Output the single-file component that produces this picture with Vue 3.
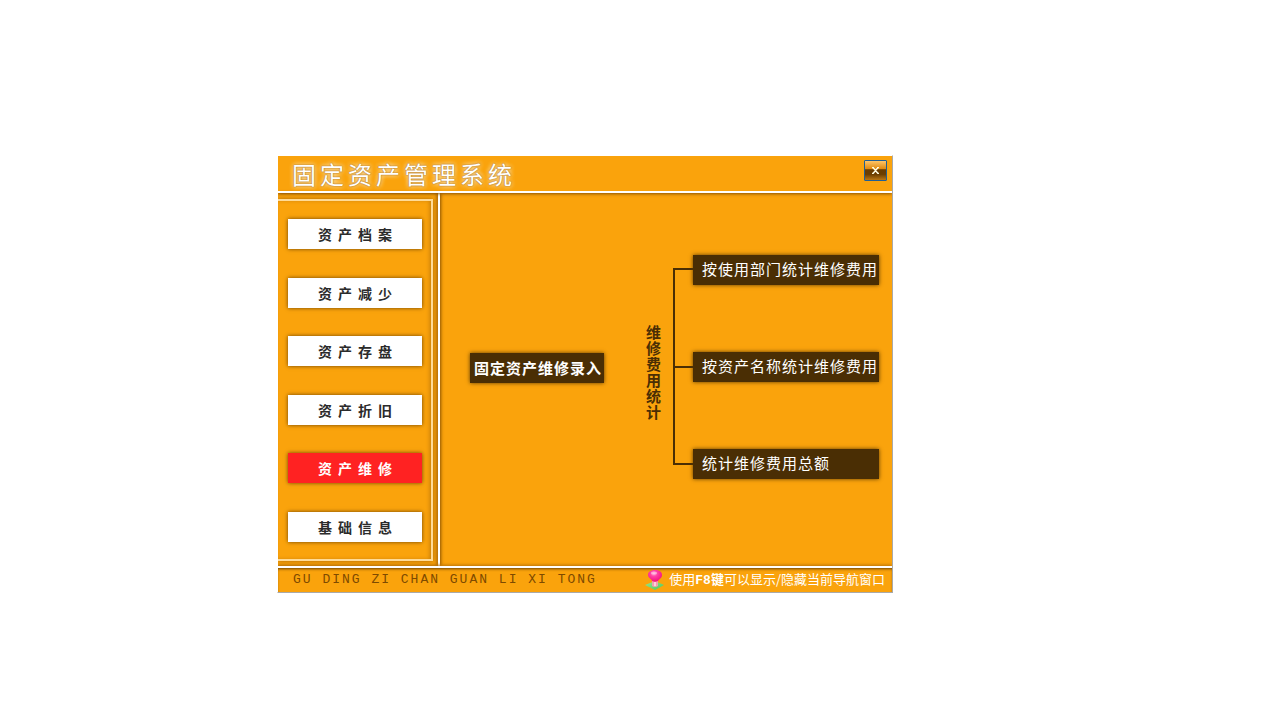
<script setup>
import { ref } from 'vue'

const modules = ['资产档案', '资产减少', '资产存盘', '资产折旧', '资产维修', '基础信息']
const active = ref('资产维修')
const reports = ['按使用部门统计维修费用', '按资产名称统计维修费用', '统计维修费用总额']
</script>

<template>
  <div class="page">
    <section class="window">
      <header class="titlebar">
        <h1>固定资产管理系统</h1>
        <button class="close" type="button" aria-label="关闭">
          <svg viewBox="0 0 7 7" width="7" height="7">
            <path d="M0 .5h2M5 .5h2M1 .5l5 6M6 .5l-5 6M0 6.500h2M5 6.500h2" fill="none" stroke="#fffbe0" stroke-width="1.500" />
          </svg>
        </button>
      </header>

      <div class="body">
        <nav class="sidebar">
          <div class="frame">
            <button
              v-for="m in modules"
              :key="m"
              type="button"
              class="module"
              :class="{ active: m === active }"
              @click="active = m"
            >{{ m }}</button>
          </div>
        </nav>
        <main class="flow">
          <button type="button" class="node entry">固定资产维修录入</button>
          <h2>维修费用统计</h2>
          <div class="bracket"><i></i></div>
          <div class="reports">
            <button v-for="r in reports" :key="r" type="button" class="node report">{{ r }}</button>
          </div>
        </main>
      </div>

      <footer class="status">
        <span class="pinyin">GU DING ZI CHAN GUAN LI XI TONG</span>
        <span class="hint">
          <svg width="20" height="22" viewBox="0 0 20 22">
            <defs>
              <radialGradient id="bulb" cx=".42" cy=".3" r=".75">
                <stop offset="0" stop-color="#ff9fd2" />
                <stop offset=".35" stop-color="#ff3fa4" />
                <stop offset="1" stop-color="#f00a78" />
              </radialGradient>
              <linearGradient id="base" x2="1" y2="1">
                <stop offset="0" stop-color="#9be88c" />
                <stop offset="1" stop-color="#4cc85c" />
              </linearGradient>
            </defs>
            <path d="M0 16l10-4 9 4-9 5z" fill="url(#base)" />
            <path d="M7 11h6v6q-3 2-6 0z" fill="#f5a0ae" />
            <path d="M9 13h2v4H9z" fill="#ffd0dc" />
            <path d="M3 6C3 2.500 6 1 10 1S17 2.500 17 6c0 3-3 4-4 6q-3 1.500-6 0C7 10 3 9 3 6z" fill="url(#bulb)" />
            <ellipse cx="9" cy="4" rx="3" ry="1.500" fill="#fff" opacity=".4" />
          </svg>
          <span>使用<b>F8键</b>可以显示/隐藏当前导航窗口</span>
        </span>
      </footer>
    </section>
  </div>
</template>

<style>
html,
body {
  background: #fff;
}
</style>

<style scoped>
.page {
  padding: 155px 387px 0 277px;
  font-family: "Noto Sans CJK SC", sans-serif;
}
.window {
  box-sizing: border-box;
  min-width: 616px;
  overflow: hidden;
  background: #faa30c;
  border: 1px solid #a9a9a9;
  border-top-color: #fff;
  border-left-color: #fff;
}
button {
  font-family: inherit;
  margin: 0;
  padding: 0;
  border: 0;
  cursor: pointer;
  white-space: nowrap;
}
h1,
h2 {
  margin: 0;
}
.titlebar {
  display: flex;
  justify-content: space-between;
  align-items: flex-start;
  height: 35px;
  padding: 0 5px 0 14px;
  border-bottom: 2px solid #fff;
  box-shadow: 0 1px 3px #8a5200;
  position: relative;
}
h1 {
  font-size: 24px;
  line-height: 36px;
  font-weight: 400;
  letter-spacing: 4px;
  color: #fff;
  text-shadow: 0 0 2px #a86a10, 0 0 1px #b87820, 0 0 4px #ffe9b8, 0 0 5px #ffe0a0;
}
.close {
  display: flex;
  align-items: center;
  justify-content: center;
  width: 23px;
  height: 21px;
  margin-top: 4px;
  border: 1px solid #1f5f96;
  border-radius: 1px;
  background: linear-gradient(#ffc566, #e08c14 40%, #6a3c00 46%, #6b3d00 70%, #b87514);
}
.body {
  display: flex;
  min-height: 373px;
}
.sidebar {
  display: flex;
  box-sizing: border-box;
  width: 162px;
  padding: 6px 5px 5px 0;
  border-right: 2px solid #fff;
  box-shadow: 1px 0 3px #8a5200, inset -2px 0 3px #b87208;
}
.frame {
  flex: 1;
  display: flex;
  flex-direction: column;
  justify-content: space-between;
  padding: 18px 9px 17px 10px;
  border: 2px solid #ffdb97;
  border-left: 0;
  box-shadow: 0 0 4px #a86600, inset -2px 0 4px -1px #c27a08;
}
.module {
  height: 30px;
  padding-left: 6px;
  font-size: 14px;
  line-height: 30px;
  font-weight: 700;
  letter-spacing: 6px;
  color: #2b2b2b;
  background: #fff;
  box-shadow: 0 0 4px #6b4000;
}
.module.active {
  color: #fff;
  background: #ff2222;
}
.flow {
  flex: 1;
  display: flex;
  align-items: center;
  padding: 62px 13px 87px 30px;
}
.node {
  height: 30px;
  padding-bottom: 2px;
  font-size: 15px;
  line-height: 28px;
  letter-spacing: 1px;
  color: #fff;
  background: #4a2e04;
  box-shadow: 0 0 4px #5a3800;
}
.entry {
  width: 134px;
  margin-top: 2px;
  padding: 0 0 0 2px;
  font-weight: 700;
}
h2 {
  width: 15px;
  margin: 10px 12px 0 42px;
  font-size: 15px;
  line-height: 16px;
  font-weight: 700;
  color: #4a2e04;
}
.bracket {
  box-sizing: border-box;
  display: flex;
  align-items: center;
  align-self: stretch;
  width: 20px;
  margin: 13px 0 14px;
  border: 2px solid #4a2e04;
  border-right: 0;
}
.bracket i {
  flex: 1;
  height: 2px;
  background: #4a2e04;
}
.reports {
  flex: 1;
  display: flex;
  flex-direction: column;
  gap: 67px;
}
.report {
  padding-left: 9px;
  text-align: left;
}
.status {
  display: flex;
  justify-content: space-between;
  align-items: center;
  height: 24px;
  padding: 0 7px 0 15px;
  border-top: 2px solid #fff;
  box-shadow: inset 0 2px 3px -1px #6b4000, 0 -1px 3px #b87208;
  position: relative;
  white-space: nowrap;
}
.pinyin {
  font-family: "Liberation Mono", monospace;
  font-size: 13px;
  line-height: 22px;
  letter-spacing: 2px;
  color: #7d4a00;
}
.hint {
  display: flex;
  align-items: center;
  gap: 4px;
  font-size: 13px;
  line-height: 22px;
  color: #fff;
}
.hint b {
  font-family: "Liberation Mono", "Noto Sans CJK SC", monospace;
}
</style>
